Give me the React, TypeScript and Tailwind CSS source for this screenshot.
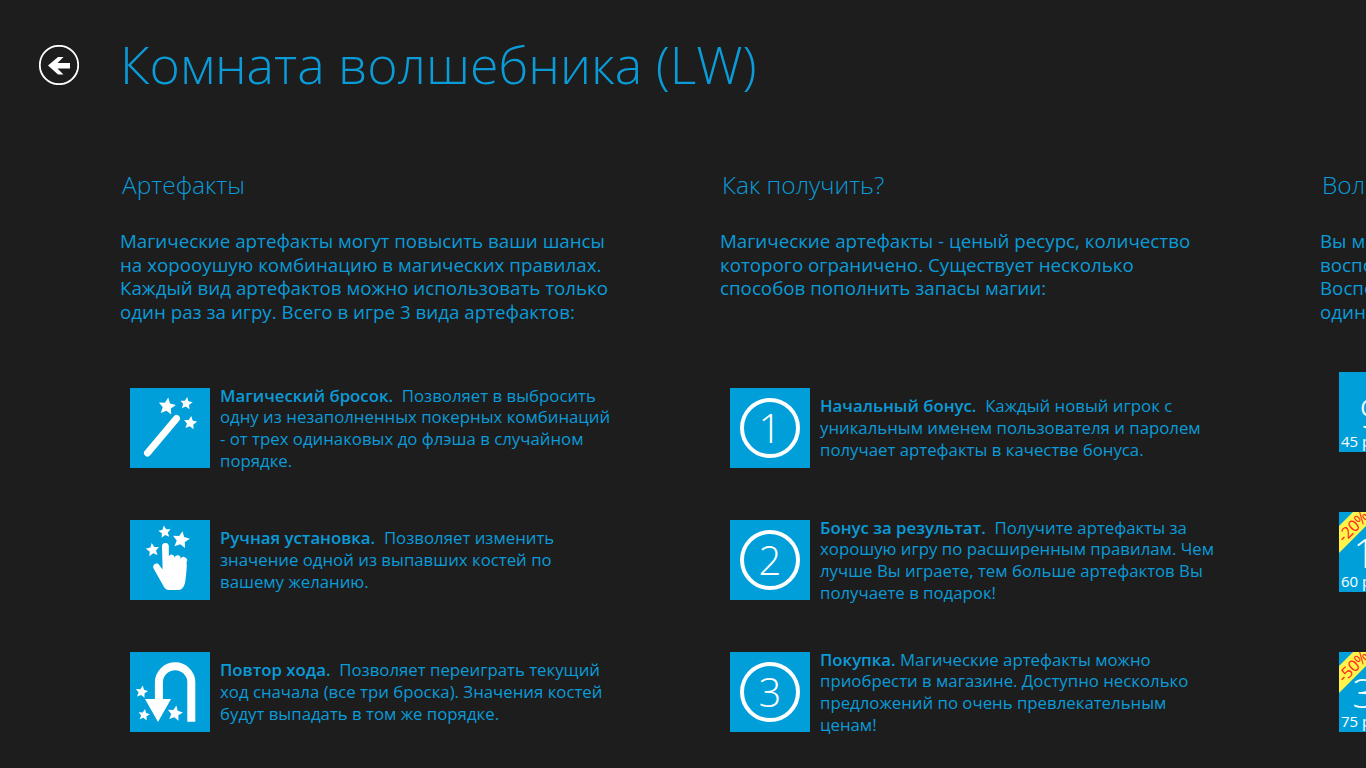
import type { ReactNode } from "react";

const font = { fontFamily: '"Open Sans", "Noto Sans", sans-serif' };

function starPoints(cx: number, cy: number, r: number, rot = 0) {
  const pts: string[] = [];
  for (let i = 0; i < 10; i++) {
    const rad = i % 2 === 0 ? r : r * 0.48;
    const a = ((-90 + rot + i * 36) * Math.PI) / 180;
    pts.push(`${(cx + rad * Math.cos(a)).toFixed(2)},${(cy + rad * Math.sin(a)).toFixed(2)}`);
  }
  return pts.join(" ");
}

function Star({ x, y, r, rot = 0 }: { x: number; y: number; r: number; rot?: number }) {
  return <polygon points={starPoints(x, y, r, rot)} fill="white" />;
}

function Tile({ children }: { children: ReactNode }) {
  return <div className="w-20 h-20 shrink-0 bg-[#009fda] flex items-center justify-center">{children}</div>;
}

function WandIcon() {
  return (
    <svg viewBox="0 0 80 80" className="w-20 h-20">
      <line x1="17.5" y1="65" x2="46.5" y2="30.5" stroke="white" strokeWidth="7" strokeLinecap="round" />
      <Star x={37} y={18.5} r={9} rot={8} />
      <Star x={56.3} y={15.5} r={6.5} rot={8} />
      <Star x={60.3} y={35} r={7} rot={8} />
    </svg>
  );
}

function HandIcon() {
  return (
    <svg viewBox="0 0 80 80" className="w-20 h-20">
      <Star x={34.7} y={12} r={6.5} rot={-8} />
      <Star x={51} y={20} r={9} rot={10} />
      <Star x={22.7} y={30} r={7} rot={-8} />
      <path
        d="M32 26.500a3.400 3.400 0 0 1 6.800 0V36.500a3 3 0 0 1 5.800 1.200a3 3 0 0 1 6 1a3 3 0 0 1 6 3.400c.6 5-.4 11-1 17c-.5 6-2.500 11-7.500 11h-9c-3.500 0-5-2.500-6.500-5.500l-9-16c-2-4 3.500-7 5.600-3.500l3.400 4.500z"
        fill="white"
      />
    </svg>
  );
}

function UTurnIcon() {
  return (
    <svg viewBox="0 0 80 80" className="w-20 h-20">
      <path d="M61.3 69.700V30.500a16.200 16.200 0 0 0 -32.400 0V48" fill="none" stroke="white" strokeWidth="8" />
      <polygon points="15,47 41,47 28,70" fill="white" />
      <Star x={11.700} y={40} r={6.500} rot={10} />
      <Star x={14} y={63} r={6} rot={10} />
      <Star x={45} y={61.500} r={8} rot={10} />
    </svg>
  );
}

function NumberIcon({ n }: { n: number }) {
  return (
    <div className="w-[60px] h-[60px] rounded-full border-4 border-white flex items-center justify-center">
      <span className="text-white text-[40px] font-light leading-none">{n}</span>
    </div>
  );
}

function Item({ icon, title, children }: { icon: ReactNode; title: string; children: ReactNode }) {
  return (
    <div className="flex items-center gap-[10px] h-20">
      <Tile>{icon}</Tile>
      <p className="w-[396px] text-[16.8px] leading-[21.67px] text-[#0a9bd8]">
        <span className="font-semibold">{title}</span>
        {children}
      </p>
    </div>
  );
}

function Column({ title, intro, children }: { title: string; intro: ReactNode; children: ReactNode }) {
  return (
    <section className="w-[600px] shrink-0">
      <h2 className="text-[24.5px] font-light leading-8 text-[#0a9bd8] pl-[2px]">{title}</h2>
      <p className="mt-[28px] w-[490px] h-[95px] text-[18.75px] leading-[23.67px] text-[#0a9bd8]">{intro}</p>
      <div className="mt-[64px] pl-[10px] flex flex-col gap-[52px]">{children}</div>
    </section>
  );
}

function Offer({ num, price, sale, numClass }: { num: string; price: string; sale?: string; numClass: string }) {
  return (
    <div className="relative w-20 h-20 shrink-0 bg-[#009fda] overflow-hidden flex flex-col items-center">
      <span className={`mt-[17px] text-white text-[40px] font-light leading-[48px] ${numClass}`}>{num}</span>
      <span className="absolute left-[2px] bottom-[1px] text-white text-[15px] leading-5">{price}</span>
      {sale && (
        <>
          <svg viewBox="0 0 80 80" className="absolute left-0 top-0 w-20 h-20">
            <polygon points="14,0 41,0 0,41 0,14" fill="#fff44a" />
          </svg>
          <span className="absolute left-[-6px] top-[4px] w-[40px] text-center -rotate-45 text-[16px] leading-5 text-[#f22]">
            {sale}
          </span>
        </>
      )}
    </div>
  );
}

export default function App() {
  return (
    <div className="w-[1366px] h-[768px] overflow-hidden bg-[#1d1d1d]" style={font}>
      <header className="flex items-center h-[130px] pl-[39px]">
        <button className="w-10 h-10 shrink-0">
          <svg viewBox="0 0 40 40" className="w-10 h-10">
            <circle cx="20" cy="20" r="19.200" fill="none" stroke="white" strokeWidth="1.800" />
            <path d="M9 20.500 19 12h5.500l-6 6H31v5.500H18.500l6 6H19z" fill="white" />
          </svg>
        </button>
        <h1 className="ml-[41px] text-[51.8px] font-light text-[#0a9bd8] leading-none whitespace-nowrap">Комната волшебника (LW)</h1>
      </header>
      <main className="flex pl-[120px] pt-[39px]">
        <Column
          title="Артефакты"
          intro="Магические артефакты могут повысить ваши шансы на хорооушую комбинацию в магических правилах. Каждый вид артефактов можно использовать только один раз за игру. Всего в игре 3 вида артефактов:"
        >
          <Item icon={<WandIcon />} title="Магический бросок.">
            {"\u00a0\u00a0Позволяет в выбросить одну из незаполненных покерных комбинаций - от трех одинаковых до флэша в случайном порядке."}
          </Item>
          <Item icon={<HandIcon />} title="Ручная установка.">
            {"\u00a0\u00a0Позволяет изменить значение одной из выпавших костей по вашему желанию."}
          </Item>
          <Item icon={<UTurnIcon />} title="Повтор хода.">
            {"\u00a0\u00a0Позволяет переиграть текущий ход сначала (все три броска). Значения костей будут выпадать в том же порядке."}
          </Item>
        </Column>
        <Column
          title="Как получить?"
          intro="Магические артефакты - ценый ресурс, количество которого ограничено. Существует несколько способов пополнить запасы магии:"
        >
          <Item icon={<NumberIcon n={1} />} title="Начальный бонус.">
            {"\u00a0\u00a0Каждый новый игрок с уникальным именем пользователя и паролем получает артефакты в качестве бонуса."}
          </Item>
          <Item icon={<NumberIcon n={2} />} title="Бонус за результат.">
            {"\u00a0\u00a0Получите артефакты за хорошую игру по расширенным правилам. Чем лучше Вы играете, тем больше артефактов Вы получаете в подарок!"}
          </Item>
          <Item icon={<NumberIcon n={3} />} title="Покупка.">
            {" Магические артефакты можно приобрести в магазине. Доступно несколько предложений по очень превлекательным ценам!"}
          </Item>
        </Column>
        <section className="w-[400px] shrink-0">
          <h2 className="text-[24.5px] font-light leading-8 text-[#0a9bd8] pl-[2px] whitespace-nowrap">Волшебная лавка</h2>
          <p className="mt-[28px] w-[500px] h-[95px] text-[18.75px] leading-[23.67px] text-[#0a9bd8]">
            Вы можете приобрести артефакты и
            <br />
            воспользоваться ими в любой игре.
            <br />
            Воспользуйтесь предложением:
            <br />
            один раз и навсегда.
          </p>
          <div className="mt-[48px] pl-[19px] flex flex-col gap-[60px]">
            <Offer num="9" price="45 р." numClass="-ml-[16px]" />
            <Offer num="15" price="60 р." sale="-20%" numClass="-ml-[6px]" />
            <Offer num="30" price="75 р." sale="-50%" numClass="-ml-[8px]" />
          </div>
        </section>
      </main>
    </div>
  );
}
